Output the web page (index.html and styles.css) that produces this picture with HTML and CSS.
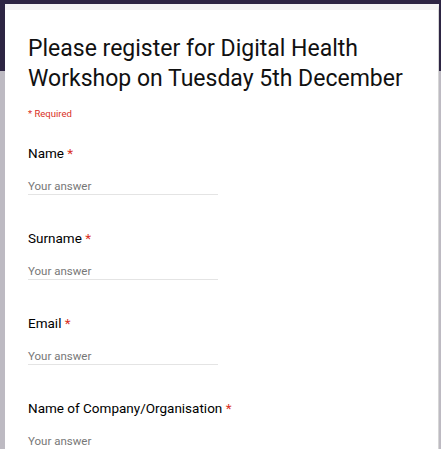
FILE: index.html
```html
<!DOCTYPE html>
<html lang="en">
<head>
    <meta charset="UTF-8">
    <meta name="viewport" content="width=device-width, initial-scale=1.0">
    <title>Digital Health Workshop</title>
    <link rel="stylesheet" href="styles.css">
</head>
<body>
    <div class="form-card">
        <h1 class="form-title">Please register for Digital Health Workshop on Tuesday 5th December</h1>
        <div class="required-note">* Required</div>

        <div class="question">
            <div class="question-label">Name <span class="star">*</span></div>
            <div class="answer">Your answer</div>
        </div>

        <div class="question">
            <div class="question-label">Surname <span class="star">*</span></div>
            <div class="answer">Your answer</div>
        </div>

        <div class="question">
            <div class="question-label">Email <span class="star">*</span></div>
            <div class="answer">Your answer</div>
        </div>

        <div class="question">
            <div class="question-label">Name of Company/Organisation <span class="star">*</span></div>
            <div class="answer">Your answer</div>
        </div>
    </div>
</body>
</html>
```

FILE: styles.css
```css
html, body {
    height: 100%;
}

body {
    margin: 0;
    font-family: Roboto, 'Liberation Sans', Arial, sans-serif;
    background: linear-gradient(#2d2543 0, #2d2543 71px, #bdbac2 71px);
    overflow: hidden;
}

.form-card {
    box-sizing: border-box;
    margin: 4px 2px 0 5px;
    height: calc(100% - 4px);
    background-color: #fff;
    border-top: 6px solid #f4f4f4;
    border-right: 1px solid #d6d6d6;
    padding: 24px 0 0 23px;
    overflow: hidden;
}

.form-title {
    margin: 0;
    font-size: 23px;
    font-weight: 400;
    line-height: 30px;
    color: #111;
    width: 400px;
}

.required-note {
    margin-top: 14px;
    font-size: 9.5px;
    color: #d93025;
}

.question {
    padding-top: 25px;
    height: 60px;
}

.question-label {
    font-size: 13.5px;
    line-height: 18px;
    color: #000;
}

.star {
    color: #d93025;
}

.answer {
    margin-top: 17px;
    width: 190px;
    font-size: 11.5px;
    line-height: 14px;
    padding-bottom: 1px;
    color: #777;
    border-bottom: 1px solid #e4e4e4;
}
```
